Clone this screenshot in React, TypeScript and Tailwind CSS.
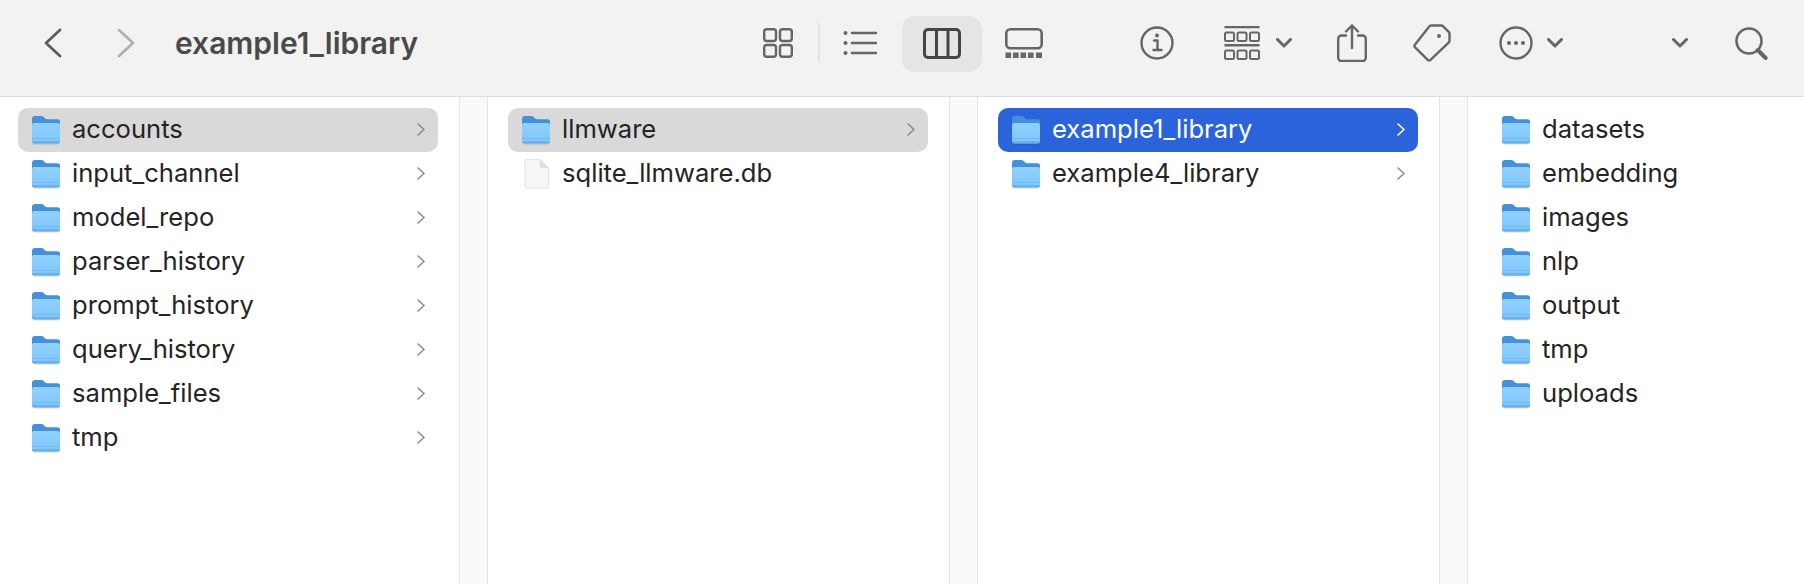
import { useId } from "react";

const FONT = "font-['Inter','Liberation_Sans',sans-serif]";

function Folder() {
  const id = useId();
  return (
    <svg width="28" height="29" viewBox="0 0 28 29" className="shrink-0">
      <defs>
        <linearGradient id={id} x1="0" y1="0" x2="0" y2="1">
          <stop offset="0" stopColor="#90d1fd" />
          <stop offset="1" stopColor="#7fc6fa" />
        </linearGradient>
      </defs>
      <rect x="0.5" y="4" width="27" height="24.5" rx="2.5" fill="#000" opacity="0.15" />
      <path d="M0 3a3 3 0 0 1 3-3h6.5c1.6 0 2.2 1 3.2 2 .6.6 1.2 1.2 2.3 1.2h10.5a2.5 2.5 0 0 1 2.5 2.5V12H0Z" fill="#4590da" />
      <rect x="0" y="7" width="28" height="20.5" rx="2.2" fill={`url(#${id})`} />
      <rect x="0" y="22" width="28" height="1" fill="#5ca6e6" opacity="0.45" />
      <path d="M0 25h28a2.2 2.2 0 0 1-2.2 2.5H2.2A2.2 2.2 0 0 1 0 25Z" fill="#62abeb" opacity="0.8" />
    </svg>
  );
}

function FileIcon() {
  return (
    <svg width="28" height="30" viewBox="0 0 28 30" className="shrink-0">
      <path d="M3 2a1.5 1.5 0 0 1 1.5-1.5H18L26.5 9v18.5A1.5 1.5 0 0 1 25 29H4.500A1.500 1.500 0 0 1 3 27.500Z" fill="#f6f6f6" stroke="#e2e2e2" strokeWidth="1" />
      <path d="M18 .5V7.500A1.500 1.500 0 0 0 19.500 9H26.500Z" fill="#dedede" />
    </svg>
  );
}

function RowChevron({ white }: { white?: boolean }) {
  return (
    <svg width="8" height="13" viewBox="0 0 8 13" className="shrink-0 mb-[2px]" fill="none" stroke={white ? "#ffffff" : "#8c8c8c"} strokeWidth="1.6" strokeLinecap="round" strokeLinejoin="round">
      <path d="M1 1l6 5.500-6 5.500" />
    </svg>
  );
}

function DropChevron({ className }: { className: string }) {
  return (
    <svg width="16" height="10" viewBox="0 0 16 10" className={className} fill="none" stroke="#666664" strokeWidth="3" strokeLinecap="round" strokeLinejoin="round">
      <path d="M1.500 1.500L8 8l6.500-6.500" />
    </svg>
  );
}

type Row = { name: string; file?: boolean; arrow?: boolean; state?: "gray" | "blue" };

const COLUMNS: { pad: string; width: string; rows: Row[] }[] = [
  {
    pad: "w-[459px] pl-[18px]",
    width: "w-[420px]",
    rows: [
      { name: "accounts", arrow: true, state: "gray" },
      { name: "input_channel", arrow: true },
      { name: "model_repo", arrow: true },
      { name: "parser_history", arrow: true },
      { name: "prompt_history", arrow: true },
      { name: "query_history", arrow: true },
      { name: "sample_files", arrow: true },
      { name: "tmp", arrow: true },
    ],
  },
  {
    pad: "w-[461px] pl-[20px]",
    width: "w-[420px]",
    rows: [
      { name: "llmware", arrow: true, state: "gray" },
      { name: "sqlite_llmware.db", file: true },
    ],
  },
  {
    pad: "w-[461px] pl-[20px]",
    width: "w-[420px]",
    rows: [
      { name: "example1_library", arrow: true, state: "blue" },
      { name: "example4_library", arrow: true },
    ],
  },
  {
    pad: "flex-1 pl-[20px]",
    width: "w-[300px]",
    rows: [
      { name: "datasets" },
      { name: "embedding" },
      { name: "images" },
      { name: "nlp" },
      { name: "output" },
      { name: "tmp" },
      { name: "uploads" },
    ],
  },
];

function FinderRow({ row, width }: { row: Row; width: string }) {
  const bg = row.state === "gray" ? "bg-[#d9d9d9]" : row.state === "blue" ? "bg-[#2b63db]" : "";
  const text = row.state === "blue" ? "text-white" : "text-[#242424]";
  return (
    <div className={`flex items-center h-[44px] pl-[14px] pr-[13px] rounded-[10px] ${width} ${bg}`}>
      {row.file ? <FileIcon /> : <Folder />}
      <span className={`ml-[12px] mb-[2px] flex-1 text-[25.6px] leading-none ${text}`}>{row.name}</span>
      {row.arrow && <RowChevron white={row.state === "blue"} />}
    </div>
  );
}

export default function App() {
  const ic = { fill: "none", stroke: "#666664", strokeLinecap: "round", strokeLinejoin: "round" } as const;
  return (
    <div className={`w-[1804px] h-[584px] overflow-hidden bg-white flex flex-col ${FONT}`}>
      <div className="h-[97px] shrink-0 flex items-center pb-[10px] bg-[#f2f2f0] border-b border-[#dcdcdc]">
        <svg width="18" height="30" viewBox="0 0 18 30" className="ml-[44px]" fill="none" stroke="#5c5c5c" strokeWidth="2.800" strokeLinecap="round" strokeLinejoin="round">
          <path d="M16 2L2 15l14 13" />
        </svg>
        <svg width="18" height="30" viewBox="0 0 18 30" className="ml-[55px]" fill="none" stroke="#b0b0b0" strokeWidth="2.800" strokeLinecap="round" strokeLinejoin="round">
          <path d="M2 2l14 13L2 28" />
        </svg>
        <div className="ml-[40px] w-[588px] text-[30px] font-semibold leading-none text-[#4a4a4a]">example1_library</div>

        <svg width="30" height="30" viewBox="0 0 30 30" {...ic} strokeWidth="2.400">
          <rect x="1.200" y="1.200" width="11.800" height="11.800" rx="2.500" />
          <rect x="17" y="1.200" width="11.800" height="11.800" rx="2.500" />
          <rect x="1.200" y="17" width="11.800" height="11.800" rx="2.500" />
          <rect x="17" y="17" width="11.800" height="11.800" rx="2.500" />
        </svg>
        <div className="ml-[25px] w-[2px] h-[40px] bg-[#e2e2e0]" />
        <svg width="34" height="24" viewBox="0 0 34 24" className="ml-[23px]" {...ic} strokeWidth="2.600">
          <circle cx="2.500" cy="2" r="2" fill="#666664" stroke="none" />
          <circle cx="2.500" cy="12" r="2" fill="#666664" stroke="none" />
          <circle cx="2.500" cy="22" r="2" fill="#666664" stroke="none" />
          <path d="M9 2h24M9 12h24M9 22h24" />
        </svg>
        <div className="ml-[25px] mt-[2px] pb-[2px] w-[80px] h-[56px] flex items-center justify-center rounded-[13px] bg-[#e5e5e3]">
          <svg width="38" height="31" viewBox="0 0 38 31" fill="none" stroke="#454545" strokeWidth="3" strokeLinejoin="round">
            <rect x="1.500" y="1.500" width="35" height="28" rx="3.500" />
            <path d="M13.500 1.500v28M25 1.500v28" />
          </svg>
        </div>
        <svg width="38" height="30" viewBox="0 0 38 30" className="ml-[23px]" {...ic} strokeWidth="2.600">
          <rect x="1.300" y="1.300" width="35.400" height="19" rx="4" />
          <g fill="#666664" stroke="none">
            <rect x="0.500" y="24.500" width="5.600" height="5.500" />
            <rect x="8" y="24.500" width="5.600" height="5.500" />
            <rect x="15.500" y="24.500" width="5.600" height="5.500" />
            <rect x="23" y="24.500" width="5.600" height="5.500" />
            <rect x="31" y="24.500" width="6" height="5.500" />
          </g>
        </svg>
        <svg width="34" height="34" viewBox="0 0 34 34" className="ml-[97px]" {...ic} strokeWidth="2.400">
          <circle cx="17" cy="17" r="15.500" />
          <circle cx="17" cy="9.500" r="1.900" fill="#666664" stroke="none" />
          <path d="M14 14.500h3.500v9M13.500 24h8" />
        </svg>
        <svg width="36" height="34" viewBox="0 0 36 34" className="ml-[50px]" {...ic} strokeWidth="2">
          <path d="M0.500 1h35M0.500 19.300h35" strokeWidth="2.400" strokeLinecap="butt" />
          <rect x="1" y="6.500" width="9" height="8.500" rx="1.500" />
          <rect x="13.500" y="6.500" width="9" height="8.500" rx="1.500" />
          <rect x="26" y="6.500" width="9" height="8.500" rx="1.500" />
          <rect x="1" y="24.500" width="9" height="8.500" rx="1.500" />
          <rect x="13.500" y="24.500" width="9" height="8.500" rx="1.500" />
          <rect x="26" y="24.500" width="9" height="8.500" rx="1.500" />
        </svg>
        <DropChevron className="ml-[16px]" />
        <svg width="30" height="38" viewBox="0 0 30 38" className="ml-[45px]" {...ic} strokeWidth="2.400">
          <path d="M9 11.500H4.500a3.300 3.300 0 0 0-3.300 3.300v18.900a3.300 3.300 0 0 0 3.300 3.300h21a3.300 3.300 0 0 0 3.300-3.300V14.800a3.300 3.300 0 0 0-3.300-3.300H21" />
          <path d="M15 24V1.500M9 7.500l6-6 6 6" />
        </svg>
        <svg width="38" height="38" viewBox="0 0 38 38" className="ml-[46px]" {...ic} strokeWidth="2.400">
          <path d="M18 1.500h10.500a2 2 0 0 1 1.400.6l6 6a2 2 0 0 1 .6 1.400v7.500a2 2 0 0 1-.6 1.400L17.500 35.900a2 2 0 0 1-2.800 0L2.100 23.300a2 2 0 0 1 0-2.800L16.600 2.100a2 2 0 0 1 1.400-.6Z" />
          <circle cx="26" cy="12" r="2" fill="#666664" stroke="none" />
        </svg>
        <svg width="34" height="34" viewBox="0 0 34 34" className="ml-[48px]" {...ic} strokeWidth="2.400">
          <circle cx="17" cy="17" r="15.500" />
          <g fill="#666664" stroke="none">
            <circle cx="10" cy="17" r="2.100" />
            <circle cx="17" cy="17" r="2.100" />
            <circle cx="24" cy="17" r="2.100" />
          </g>
        </svg>
        <DropChevron className="ml-[14px]" />
        <DropChevron className="ml-[109px]" />
        <svg width="33" height="33" viewBox="0 0 33 33" className="ml-[47px]" {...ic} strokeWidth="2.600">
          <circle cx="14" cy="14" r="12.500" />
          <path d="M22.800 23l7.800 8" strokeWidth="4" />
        </svg>
      </div>

      <div className="flex-1 flex min-h-0">
        {COLUMNS.map((col, i) => (
          <div key={i} className={`flex ${i === 3 ? "flex-1" : ""}`}>
            <div className={`${col.pad} pt-[11px] flex flex-col`}>
              {col.rows.map(row => (
                <FinderRow key={row.name} row={row} width={col.width} />
              ))}
            </div>
            {i < 3 && <div className="w-[29px] bg-[#f9f9f9] border-x border-[#e4e4e4]" />}
          </div>
        ))}
      </div>
    </div>
  );
}
